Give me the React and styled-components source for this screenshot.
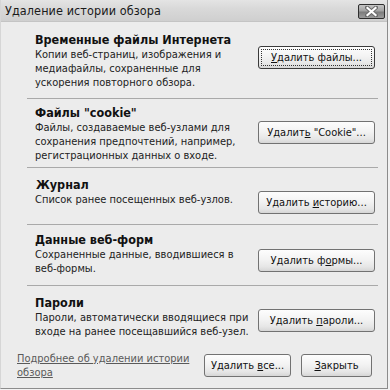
import React from "react";
import styled, { createGlobalStyle } from "styled-components";

const Global = createGlobalStyle`
  html, body { margin: 0; padding: 0; background: #f2f2f2; }
  body { font-family: "DejaVu Sans Condensed", "DejaVu Sans", "Liberation Sans", sans-serif; }
`;

const Window = styled.div`
  width: 388px;
  height: 389px;
  box-sizing: border-box;
  border-left: 1px solid #d6d6d6;
  border-right: 1px solid #8c8c8c;
  border-bottom: 1px solid #8c8c8c;
  background: #ececec;
  display: flex;
  flex-direction: column;
  color: #111;
  font-size: 11px;
`;

const TitleBar = styled.div`
  height: 22px;
  flex: none;
  display: flex;
  align-items: center;
  justify-content: space-between;
  padding: 0 2px 0 4px;
  background: linear-gradient(#e4e4e4, #d9d9d9 40%, #cfcfcf);
  border-bottom: 1px solid #c4c4c4;
  box-sizing: border-box;
`;

const Title = styled.span`
  font-size: 12.5px;
  color: #1a1a1a;
  letter-spacing: 0.1px;
`;

const CloseBtn = styled.div`
  width: 27px;
  height: 15px;
  box-sizing: border-box;
  border: 1px solid #2e2e2e;
  border-radius: 2px;
  background: linear-gradient(#c4c4c4, #a2a2a2 45%, #7c7c7c 55%, #9c9c9c);
  display: flex;
  align-items: center;
  justify-content: center;
  margin-top: 1px;
`;

const Body = styled.div`
  flex: 1;
  display: flex;
  flex-direction: column;
  padding: 0 9px 0 26px;
`;

const Section = styled.div`
  padding: ${(p) => p.$pt}px 3px ${(p) => p.$pb}px 8px;
  border-bottom: ${(p) => (p.$last ? "none" : "1px solid #a9a9a9")};
`;

const Heading = styled.div`
  font-weight: bold;
  font-size: 12.5px;
  line-height: 15px;
  margin-bottom: 1px;
  padding-left: ${(p) => p.$indent || 0}px;
`;

const Row = styled.div`
  display: flex;
  justify-content: space-between;
  align-items: flex-start;
`;

const Desc = styled.div`
  line-height: 14px;
  color: #222;
`;

const Line = styled.span`
  display: block;
  white-space: nowrap;
`;

const Button = styled.button`
  width: ${(p) => p.$w || 117}px;
  height: 23px;
  flex: none;
  margin-top: ${(p) => (p.$mt === undefined ? -2 : p.$mt)}px;
  box-sizing: border-box;
  border: 1px solid ${(p) => (p.$focus ? "#3a3a3a" : "#727272")};
  border-radius: 3px;
  background: linear-gradient(#fdfdfd, #f3f3f3 45%, #e6e6e6 80%, #d6d6d6);
  font-family: inherit;
  font-size: 11px;
  color: #111;
  padding: 0;
  position: relative;
  display: flex;
  align-items: center;
  justify-content: center;
  &::after {
    content: "";
    display: ${(p) => (p.$focus ? "block" : "none")};
    position: absolute;
    inset: 2px;
    border: 1px dotted #333;
  }
`;

const Key = styled.span`
  text-decoration: underline;
`;

const Footer = styled.div`
  display: flex;
  align-items: flex-start;
  margin-left: -10px;
  padding-top: 15px;
`;

const HelpLink = styled.a`
  color: #5a5a5a;
  text-decoration: underline;
  line-height: 14px;
  width: 187px;
  margin-top: -2px;
`;

const FooterButtons = styled.div`
  display: flex;
  gap: 10px;
`;

const sections = [
  {
    title: "Временные файлы Интернета",
    lines: ["Копии веб-страниц, изображения и", "медиафайлы, сохраненные для", "ускорения повторного обзора."],
    btn: ["", "У", "далить файлы..."],
    focus: true,
    pt: 10,
    pb: 8,
  },
  {
    title: 'Файлы "cookie"',
    lines: ["Файлы, создаваемые веб-узлами для", "сохранения предпочтений, например,", "регистрационных данных о входе."],
    btn: ["Удалит", "ь", ' "Cookie"...'],
    pt: 6,
    pb: 4,
    mt: 0,
  },
  {
    title: "Журнал",
    lines: ["Список ранее посещенных веб-узлов."],
    btn: ["Удалить ", "и", "сторию..."],
    pt: 9,
    pb: 10,
    indent: 1,
  },
  {
    title: "Данные веб-форм",
    lines: ["Сохраненные данные, вводившиеся в", "веб-формы."],
    btn: ["Удалить ф", "о", "рмы..."],
    pt: 7,
    pb: 9,
    mt: 1,
  },
  {
    title: "Пароли",
    lines: ["Пароли, автоматически вводящиеся при", "входе на ранее посещавшийся веб-узел."],
    btn: ["Удалить ", "п", "ароли..."],
    pt: 9,
    pb: 0,
    last: true,
  },
];

export default function App() {
  return (
    <>
      <Global />
      <Window>
        <TitleBar>
          <Title>Удаление истории обзора</Title>
          <CloseBtn>
            <svg width="13" height="11" viewBox="0 0 13 11">
              <path d="M2 1.5 L11 9.5 M11 1.5 L2 9.5" stroke="#6a6a6a" strokeWidth="4" strokeLinecap="square" />
              <path d="M2.5 2 L10.5 9 M10.5 2 L2.5 9" stroke="#ffffff" strokeWidth="2.2" strokeLinecap="square" />
            </svg>
          </CloseBtn>
        </TitleBar>
        <Body>
          {sections.map((s) => (
            <Section key={s.title} $pt={s.pt} $pb={s.pb} $last={s.last}>
              <Heading $indent={s.indent}>{s.title}</Heading>
              <Row>
                <Desc>
                  {s.lines.map((l) => (
                    <Line key={l}>{l}</Line>
                  ))}
                </Desc>
                <Button $focus={s.focus} $mt={s.mt}>
                  <span>
                    {s.btn[0]}
                    <Key>{s.btn[1]}</Key>
                    {s.btn[2]}
                  </span>
                </Button>
              </Row>
            </Section>
          ))}
          <Footer>
            <HelpLink href="#">
              Подробнее об удалении истории
              <br />
              обзора
            </HelpLink>
            <FooterButtons>
              <Button $w={87} $mt={0}>
                <span>
                  Удалить <Key>в</Key>се...
                </span>
              </Button>
              <Button $w={71} $mt={0}>
                <span>
                  <Key>З</Key>акрыть
                </span>
              </Button>
            </FooterButtons>
          </Footer>
        </Body>
      </Window>
    </>
  );
}
